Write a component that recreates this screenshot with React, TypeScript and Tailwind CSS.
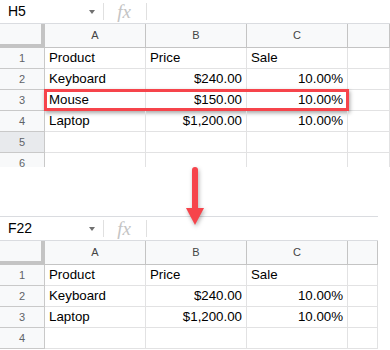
import { Fragment } from 'react'

type Row = { product: string; price: string; sale: string }

const before: Row[] = [
  { product: 'Product', price: 'Price', sale: 'Sale' },
  { product: 'Keyboard', price: '$240.00', sale: '10.00%' },
  { product: 'Mouse', price: '$150.00', sale: '10.00%' },
  { product: 'Laptop', price: '$1,200.00', sale: '10.00%' },
]

const after: Row[] = [
  { product: 'Product', price: 'Price', sale: 'Sale' },
  { product: 'Keyboard', price: '$240.00', sale: '10.00%' },
  { product: 'Laptop', price: '$1,200.00', sale: '10.00%' },
]

const grid = 'grid grid-cols-[45px_101px_101px_101px_1fr]'

function FormulaBar({ name, topBorder }: { name: string; topBorder?: boolean }) {
  return (
    <div
      className={`flex h-[24px] items-center border-b border-[#dadce0] ${topBorder ? 'h-[25px] border-t' : ''}`}
    >
      <div className="flex w-[103px] items-center justify-between pl-2 pr-[8px] text-[14px] text-black">
        <span>{name}</span>
        <span className="mt-[1px] h-0 w-0 border-x-[3px] border-t-[4px] border-x-transparent border-t-[#707070]" />
      </div>
      <div className="h-[17px] w-px bg-[#e0e0e0]" />
      <div className="flex w-[42px] justify-center pr-[2px] font-['Liberation_Serif',serif] text-[19px] italic leading-none text-[#c4c4c4]">
        fx
      </div>
      <div className="h-[17px] w-px bg-[#e0e0e0]" />
    </div>
  )
}

function Sheet({
  name,
  rows,
  blanks,
  activeRow,
  highlight,
  topBorder,
}: {
  name: string
  rows: Row[]
  blanks: number
  activeRow?: number
  highlight?: number
  topBorder?: boolean
}) {
  const cell = 'flex h-[21px] items-center border-b border-r border-[#e2e2e3] px-[4px] text-[13.3px] text-black'
  const rowHead = 'flex h-[21px] items-center justify-center border-b border-r border-[#c9c9c9] text-[11px] text-[#5f6368]'
  const all: (Row | null)[] = [...rows, ...Array(blanks).fill(null)]

  return (
    <div className="font-['Liberation_Sans',Arial,sans-serif]">
      <FormulaBar name={name} topBorder={topBorder} />
      <div className={grid}>
        <div className="h-[24px] border-b-4 border-r-4 border-[#c4c4c4] bg-[#f8f9fa]" />
        {['A', 'B', 'C', ''].map((c, i) => (
          <div
            key={i}
            className="flex h-[24px] items-center justify-center border-b border-r border-[#c4c4c4] bg-[#f8f9fa] text-[11px] text-[#444]"
          >
            {c}
          </div>
        ))}
      </div>
      {all.map((r, i) => (
        <div key={i} className={`relative ${grid}`}>
          <div className={`${rowHead} ${activeRow === i + 1 ? 'bg-[#e8eaed]' : 'bg-[#f8f9fa]'}`}>{i + 1}</div>
          {r ? (
            <Fragment>
              <div className={cell}>{r.product}</div>
              <div className={`${cell} ${i === 0 ? '' : 'justify-end'}`}>{r.price}</div>
              <div className={`${cell} ${i === 0 ? '' : 'justify-end'}`}>{r.sale}</div>
            </Fragment>
          ) : (
            <Fragment>
              <div className={cell} />
              <div className={cell} />
              <div className={cell} />
            </Fragment>
          )}
          <div className={cell} />
          {highlight === i + 1 && (
            <div className="absolute left-[44px] top-[-1px] h-[22px] w-[305px] border-[3px] border-[#f6444b] shadow-[1px_2px_4px_rgba(0,0,0,0.35)]" />
          )}
        </div>
      ))}
    </div>
  )
}

export default function App() {
  return (
    <div className="h-[350px] w-[390px] overflow-hidden bg-white">
      <div className="h-[167px] overflow-hidden">
        <Sheet name="H5" rows={before} blanks={2} activeRow={5} highlight={3} />
      </div>
      <div className="relative h-[49px]">
        <svg
          className="absolute left-[184px] top-0 z-10 drop-shadow-[1px_2px_2px_rgba(0,0,0,0.3)]"
          width="22"
          height="60"
          viewBox="0 0 22 60"
        >
          <rect x="8" y="0" width="6" height="44" rx="3" fill="#f6444b" />
          <polygon points="2,41 20,41 11,58" fill="#f6444b" />
        </svg>
      </div>
      <div className="w-[378px]">
        <Sheet name="F22" rows={after} blanks={1} topBorder />
      </div>
    </div>
  )
}
